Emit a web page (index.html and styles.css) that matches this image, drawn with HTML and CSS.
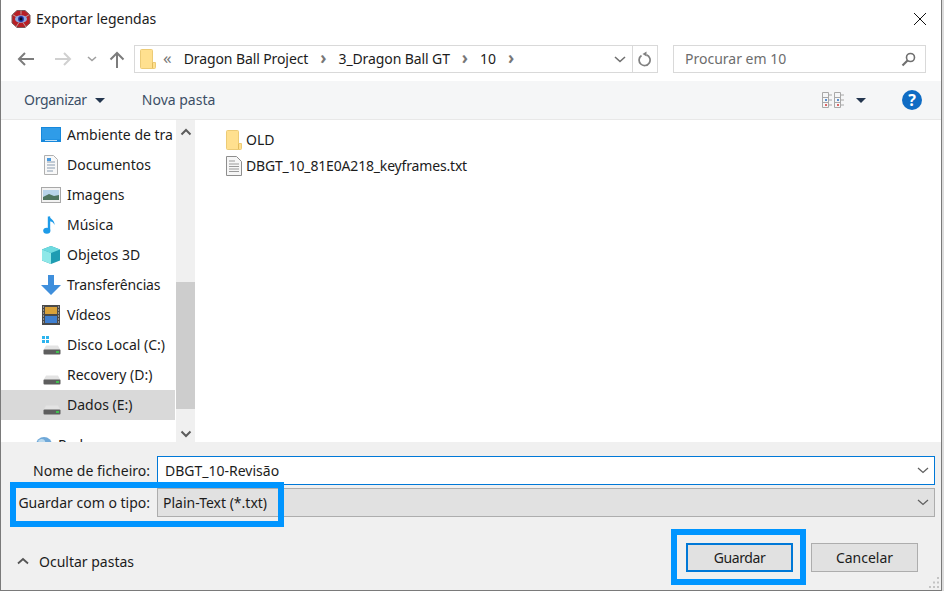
FILE: index.html
```html
<!DOCTYPE html>
<html lang="pt-PT">
<head>
  <meta charset="UTF-8" />
  <title>Exportar legendas</title>
  <link rel="stylesheet" href="styles.css">
</head>
<body>

  <svg class="defs" width="0" height="0">
    <symbol id="folder" viewBox="0 0 16 20">
      <path d="M.5 1.500a1 1 0 0 1 1-1h10a1 1 0 0 1 1 1v12h3v5a1 1 0 0 1-1 1h-13a1 1 0 0 1-1-1z" fill="#ffe08f" stroke="#eccb76"/>
      <path d="M12.500 13.500v5.500" stroke="#e2bb5c" fill="none"/>
    </symbol>
    <symbol id="drive" viewBox="0 0 18 10">
      <path d="M3 .5h12l2.500 4.500h-17z" fill="#e3e3e3"/>
      <rect x=".5" y="4.500" width="17" height="5" rx="1" fill="#5e5e5e"/>
      <rect x="13" y="6" width="3" height="2" fill="#3fc24e"/>
    </symbol>
  </svg>

  <div class="window">

    <!-- Barra de titulo -->
    <header class="titlebar">
      <svg class="app-icon" width="20" height="20" viewBox="0 0 20 20">
        <path d="M6 1.500h8l5 4.500v8l-5 4.500H6L1 14V6z" fill="#b81f25" stroke="#7a5a5a"/>
        <path d="M10 1.500v4M1.500 5.500l5 3M18.500 5.500l-5 3M5 18l3-4.500M15 18l-3-4.500" stroke="#b9a0a0" stroke-width="1"/>
        <ellipse cx="10" cy="10" rx="6" ry="3.800" fill="#8fa8e0"/>
        <circle cx="10" cy="10" r="2.900" fill="#1c2f9c"/>
        <circle cx="10" cy="10" r="1.400" fill="#05051a"/>
      </svg>
      <span class="title">Exportar legendas</span>
      <svg class="close" width="14" height="14" viewBox="0 0 14 14">
        <path d="M1 1l12 12M13 1L1 13" stroke="#111" stroke-width="1" fill="none"/>
      </svg>
    </header>

    <!-- Navegacao -->
    <nav class="navbar">
      <div class="nav-buttons">
        <svg width="18" height="14" viewBox="0 0 18 14"><path d="M17 7H2M8 1L2 7l6 6" stroke="#7c7c7c" stroke-width="2" fill="none"/></svg>
        <svg class="nav-fwd" width="18" height="14" viewBox="0 0 18 14"><path d="M1 7h15M10 1l6 6-6 6" stroke="#d0d0d0" stroke-width="2" fill="none"/></svg>
        <svg class="nav-drop" width="10" height="6" viewBox="0 0 10 6"><path d="M1 1l4 3.500L9 1" stroke="#a0a0a0" stroke-width="1.600" fill="none"/></svg>
        <svg class="nav-up" width="16" height="17" viewBox="0 0 16 17"><path d="M8 17V2M1.500 8.500L8 2l6.500 6.500" stroke="#7c7c7c" stroke-width="2" fill="none"/></svg>
      </div>
      <div class="address">
        <svg class="address-folder" width="16" height="20"><use href="#folder"/></svg>
        <span class="crumb-more">«</span>
        <span class="crumb">Dragon Ball Project</span>
        <span class="crumb-sep">›</span>
        <span class="crumb">3_Dragon Ball GT</span>
        <span class="crumb-sep">›</span>
        <span class="crumb">10</span>
        <span class="crumb-sep">›</span>
        <svg class="address-drop" width="12" height="7" viewBox="0 0 12 7"><path d="M1 1l5 4.500L11 1" stroke="#707070" stroke-width="1.600" fill="none"/></svg>
        <span class="address-refresh">
          <svg width="14" height="16" viewBox="0 0 14 16"><path d="M3.500 4.500a5.500 5.500 0 1 0 5-.6" stroke="#808080" stroke-width="1.700" fill="none"/><path d="M5.500 .5v5l4-2.500z" fill="#808080" transform="rotate(180 7 3)"/></svg>
        </span>
      </div>
      <div class="search">
        <span class="search-text">Procurar em 10</span>
        <svg width="15" height="15" viewBox="0 0 15 15"><circle cx="9.500" cy="5.500" r="4" stroke="#6f6f6f" stroke-width="1.600" fill="none"/><path d="M6.500 8.500L1.500 13.500" stroke="#6f6f6f" stroke-width="2.200"/></svg>
      </div>
    </nav>

    <!-- Barra de comandos -->
    <div class="toolbar">
      <span class="tool tool-org">Organizar</span>
      <span class="caret caret-org"></span>
      <span class="tool tool-new">Nova pasta</span>
      <svg class="view-icon" width="22" height="16" viewBox="0 0 22 16">
        <path d="M.5.5h6v15h-6zM.5 5.500h6M.5 10.500h6M12.500.5h6v15h-6zM12.500 5.500h6M12.500 10.500h6M7 3h3M7 8h3M7 13h3M19 3h3M19 8h3M19 13h3" stroke="#a8a8a8" fill="#f5f6f7"/>
        <path d="M3 7h2v2H3zM15 7h2v2h-2z" fill="#5a8fd0"/>
        <path d="M3 12h2v2H3zM15 12h2v2h-2z" fill="#d66"/>
      </svg>
      <span class="caret caret-view"></span>
      <span class="help">?</span>
    </div>

    <!-- Painel de navegacao e lista de ficheiros -->
    <main class="main">
      <ul class="sidebar">
        <li class="side-row">
          <svg class="side-icon" width="20" height="16" viewBox="0 0 20 16"><rect width="20" height="15" y="0" fill="#1688dc"/><rect x="1" y="1" width="18" height="11.500" fill="#2f9ce8"/><rect x="4" y="13" width="12" height="1" fill="#bfe0f8"/></svg>
          <span class="side-clip">Ambiente de trabalho</span>
        </li>
        <li class="side-row">
          <svg class="side-icon" width="20" height="20" viewBox="0 0 20 20"><path d="M3.500.5h9l4 4v15h-13z" fill="#f8f8f8" stroke="#b0b0b0"/><path d="M6 7h8M6 10h8M6 13h8M6 16h6" stroke="#8a9cb0"/><path d="M6 3h4v3H6z" fill="#4a9ade"/></svg>
          <span>Documentos</span>
        </li>
        <li class="side-row">
          <svg class="side-icon" width="20" height="16" viewBox="0 0 20 16"><rect x=".5" y=".5" width="19" height="15" fill="#f2f2f2" stroke="#a8a8a8"/><rect x="2" y="3" width="16" height="10" fill="#b8d4ea"/><path d="M2 10l6-3 5 2 5-1v5H2z" fill="#4f7560"/></svg>
          <span>Imagens</span>
        </li>
        <li class="side-row">
          <svg class="side-icon" width="20" height="20" viewBox="0 0 20 20"><path d="M8 1.500v14" stroke="#1e9be8" stroke-width="2.400"/><ellipse cx="5.800" cy="15.800" rx="3.600" ry="3" fill="#1e9be8"/><path d="M8 1c1 3 6 4 5.500 9-1-3-3-3.500-5.500-4z" fill="#1e9be8"/></svg>
          <span>Música</span>
        </li>
        <li class="side-row">
          <svg class="side-icon" width="20" height="20" viewBox="0 0 20 20"><path d="M10 1l9 3.500v11L10 19l-9-3.500v-11z" fill="#1f9cb2"/><path d="M1 4.500L10 1l9 3.500L10 8z" fill="#6fdbe0"/><path d="M1 4.500L10 8v11l-9-3.500z" fill="#8fe8e8"/></svg>
          <span>Objetos 3D</span>
        </li>
        <li class="side-row">
          <svg class="side-icon" width="20" height="20" viewBox="0 0 20 20"><path d="M7 0h6v10h7l-10 10L0 10h7z" fill="#3f8fdc"/></svg>
          <span class="side-tight">Transferências</span>
        </li>
        <li class="side-row">
          <svg class="side-icon" width="20" height="20" viewBox="0 0 20 20"><rect x="1" y="0" width="18" height="20" fill="#4a4a4a"/><rect x="4" y="2" width="12" height="7" fill="#d9a23a"/><rect x="4" y="11" width="12" height="7" fill="#3f7fd0"/><path d="M2 2h1M2 5h1M2 8h1M2 11h1M2 14h1M2 17h1M17 2h1M17 5h1M17 8h1M17 11h1M17 14h1M17 17h1" stroke="#ddd"/></svg>
          <span>Vídeos</span>
        </li>
        <li class="side-row">
          <svg class="side-icon" width="20" height="20" viewBox="0 0 20 20"><path d="M1 1h3v3H1zM5 1h3v3H5zM1 5h3v3H1zM5 5h3v3H5z" fill="#2cb4ee"/><use href="#drive" x="2" y="10" width="18" height="10"/></svg>
          <span>Disco Local (C:)</span>
        </li>
        <li class="side-row">
          <svg class="side-icon" width="20" height="20" viewBox="0 0 20 20"><use href="#drive" x="2" y="10" width="18" height="10"/></svg>
          <span>Recovery (D:)</span>
        </li>
        <li class="side-row side-row-active">
          <svg class="side-icon" width="20" height="20" viewBox="0 0 20 20"><use href="#drive" x="2" y="10" width="18" height="10"/></svg>
          <span>Dados (E:)</span>
        </li>
        <li class="side-row side-row-net">
          <svg class="side-icon" width="18" height="18" viewBox="0 0 18 18"><circle cx="9" cy="9" r="8" fill="#6fa8d8"/><path d="M3 5c3-3 6-2 7 0s-3 3-5 3z" fill="#b8d8ee"/></svg>
          <span>Rede</span>
        </li>
      </ul>
      <div class="scrollbar">
        <svg class="scroll-arrow" width="12" height="8" viewBox="0 0 12 8"><path d="M1.500 6.500L6 2l4.500 4.500" stroke="#5c5c5c" stroke-width="2" fill="none"/></svg>
        <div class="scroll-track"><div class="scroll-thumb"></div></div>
        <svg class="scroll-arrow" width="12" height="8" viewBox="0 0 12 8"><path d="M1.500 1.500L6 6l4.500-4.500" stroke="#5c5c5c" stroke-width="2" fill="none"/></svg>
      </div>
      <ul class="files">
        <li class="file-row">
          <svg width="16" height="20"><use href="#folder"/></svg>
          <span>OLD</span>
        </li>
        <li class="file-row">
          <svg width="16" height="20" viewBox="0 0 16 20"><path d="M.5.5h10l5 5v14H.5z" fill="#f6f6f6" stroke="#8e8e8e"/><path d="M3 5h6M3 8h10M3 10.500h10M3 13h10M3 15.500h10" stroke="#9a9a9a"/></svg>
          <span class="file-long">DBGT_10_81E0A218_keyframes.txt</span>
        </li>
      </ul>
    </main>

    <!-- Campos e botoes -->
    <footer class="footer">
      <div class="field-row field-name">
        <label class="field-label">Nome de ficheiro:</label>
        <div class="field field-input">
          <span>DBGT_10-Revisão</span>
          <svg width="12" height="7" viewBox="0 0 12 7"><path d="M1 1l5 4.500L11 1" stroke="#606060" stroke-width="1.300" fill="none"/></svg>
        </div>
      </div>
      <div class="field-row">
        <label class="field-label">Guardar com o tipo:</label>
        <div class="field field-select">
          <span>Plain-Text (*.txt)</span>
          <svg width="12" height="7" viewBox="0 0 12 7"><path d="M1 1l5 4.500L11 1" stroke="#606060" stroke-width="1.300" fill="none"/></svg>
        </div>
      </div>
      <div class="actions">
        <div class="toggle-folders">
          <svg width="12" height="8" viewBox="0 0 12 8"><path d="M1 6.500L6 2l5 4.500" stroke="#555" stroke-width="1.800" fill="none"/></svg>
          <span>Ocultar pastas</span>
        </div>
        <button class="btn btn-default">Guardar</button>
        <button class="btn">Cancelar</button>
      </div>
      <svg class="grip" width="12" height="12" viewBox="0 0 12 12">
        <path d="M9 0h2v2H9zM5 4.500h2v2H5zM9 4.500h2v2H9zM1 9h2v2H1zM5 9h2v2H5zM9 9h2v2H9z" fill="#c4c4c4"/>
      </svg>
    </footer>

    <!-- Marcacoes azuis por cima da janela -->
    <div class="mark mark-type"></div>
    <div class="mark mark-save"></div>
  </div>

</body>
</html>
```

FILE: styles.css
```css
* {
  box-sizing: border-box;
}

html, body {
  margin: 0;
  padding: 0;
  height: 100%;
  overflow: hidden;
  background: #dcdcdc;
}

body {
  font-family: 'Noto Sans', 'Open Sans', sans-serif;
  font-size: 14px;
  color: #1c1c1c;
}

ul {
  list-style: none;
  margin: 0;
  padding: 0;
}

.defs {
  position: absolute;
}

.window {
  position: relative;
  width: 942px;
  height: 591px;
  background: #fff;
  border-left: 1px solid #7a7a7a;
  border-right: 1px solid #7a7a7a;
  border-bottom: 1px solid #7a7a7a;
  display: flex;
  flex-direction: column;
}

/* o texto fica 1px acima do centro da linha */
.title, .crumb, .search-text, .tool, .side-row span, .file-row span {
  padding-bottom: 2px;
}

/* Barra de titulo */
.titlebar {
  height: 38px;
  flex: none;
  display: flex;
  align-items: center;
  padding: 0 14px 0 10px;
}

.app-icon {
  margin-right: 5px;
}

.title {
  flex: 1;
}

/* Navegacao */
.navbar {
  height: 43px;
  flex: none;
  display: flex;
  padding: 7px 15px 8px 16px;
}

.nav-buttons {
  width: 117px;
  display: flex;
  align-items: center;
}

.nav-fwd {
  margin-left: 19px;
}

.nav-drop {
  margin-left: 15px;
}

.nav-up {
  margin-left: 12px;
}

.address {
  width: 524px;
  display: flex;
  align-items: center;
  border: 1px solid #d9d9d9;
  padding-left: 5px;
}

.address-folder {
  margin-right: 7px;
}

.crumb {
  letter-spacing: -0.1px;
}

.crumb-more, .crumb-sep {
  color: #777;
  font-size: 17px;
  line-height: 1;
  padding-bottom: 3px;
}

.crumb-more {
  margin-right: 12px;
}

.crumb-sep {
  margin: 0 12px;
  font-weight: bold;
}

.address-drop {
  margin-left: auto;
  margin-right: 6px;
}

.address-refresh {
  width: 25px;
  height: 100%;
  border-left: 1px solid #d9d9d9;
  display: flex;
  align-items: center;
  justify-content: center;
}

.search {
  width: 253px;
  margin-left: 15px;
  display: flex;
  align-items: center;
  justify-content: space-between;
  border: 1px solid #d9d9d9;
  padding: 0 9px 0 11px;
  color: #6d6d6d;
}

/* Barra de comandos */
.toolbar {
  height: 39px;
  flex: none;
  display: flex;
  align-items: center;
  background: #f5f6f7;
  border-bottom: 1px solid #e8e8e8;
  padding-left: 23px;
}

.tool {
  color: #3c4f66;
}

.tool-org {
  letter-spacing: -0.3px;
}

.tool-new {
  margin-left: 37px;
}

.caret {
  width: 0;
  height: 0;
  border-left: 5px solid transparent;
  border-right: 5px solid transparent;
  border-top: 5px solid #24364f;
}

.caret-org {
  margin-left: 8px;
}

.view-icon {
  margin-left: auto;
}

.caret-view {
  margin-left: 12px;
}

.help {
  width: 20px;
  height: 20px;
  margin: 0 19px 0 36px;
  border-radius: 50%;
  background: #0f6cc4;
  color: #fff;
  font-size: 16px;
  font-weight: bold;
  line-height: 20px;
  text-align: center;
}

/* Painel principal */
.main {
  height: 322px;
  flex: none;
  display: flex;
  overflow: hidden;
}

.sidebar {
  width: 174px;
  flex: none;
  margin-right: 1px;
  overflow: hidden;
}

.side-row {
  height: 30px;
  display: flex;
  align-items: center;
  padding-left: 40px;
  white-space: nowrap;
}

.side-row span {
  margin-left: 6px;
}

.side-row .side-clip {
  max-width: 106px;
  overflow: hidden;
}

.side-tight {
  letter-spacing: -0.15px;
}

.side-icon {
  width: 20px;
  flex: none;
}

.side-row-active {
  background: #d9d9d9;
}

.side-row-net {
  margin-top: 10px;
  padding-left: 33px;
}

.side-row-net span {
  margin-left: 4px;
}

.scrollbar {
  width: 19px;
  flex: none;
  display: flex;
  flex-direction: column;
  align-items: center;
  background: #f0f0f0;
}

.scroll-arrow {
  flex: none;
  margin: 8px 0 4px;
}

.scroll-track {
  flex: 1;
  width: 100%;
  padding-top: 142px;
}

.scroll-thumb {
  height: 127px;
  background: #cdcdcd;
}

.files {
  flex: 1;
  padding: 7px 0 0 31px;
}

.file-row {
  height: 26px;
  display: flex;
  align-items: center;
  gap: 4px;
}

.file-long {
  letter-spacing: -0.17px;
}

/* Campos e botoes */
.footer {
  position: relative;
  flex: 1;
  background: #f0f0f0;
  padding-top: 14px;
}

.field-row {
  display: flex;
  height: 29px;
  margin-bottom: 3px;
  padding-right: 6px;
}

.field-label {
  width: 149px;
  margin-right: 7px;
  flex: none;
  text-align: right;
  line-height: 29px;
}

.field {
  flex: 1;
  display: flex;
  align-items: center;
  justify-content: space-between;
  padding: 0 5px 0 7px;
}

.field-input {
  background: #fff;
  border: 1px solid #0078d7;
}

.field-select {
  background: #e1e1e1;
  border: 1px solid #adadad;
  padding-left: 5px;
}

.actions {
  display: flex;
  align-items: center;
  margin-top: 26px;
  padding: 0 23px 0 16px;
}

.toggle-folders {
  flex: 1;
  display: flex;
  align-items: center;
  gap: 10px;
  margin-top: 7px;
}

.btn {
  width: 107px;
  height: 29px;
  font: inherit;
  color: #1c1c1c;
  background: #e1e1e1;
  border: 1px solid #adadad;
  padding: 0;
}

.btn + .btn {
  margin-left: 18px;
}

.btn-default {
  border: 2px solid #0078d7;
  letter-spacing: -0.4px;
}

.grip {
  position: absolute;
  right: 1px;
  bottom: 1px;
}

/* Marcacoes azuis */
.mark {
  position: absolute;
  border: 6px solid #0095ff;
}

.mark-type {
  left: 9px;
  top: 482px;
  width: 274px;
  height: 45px;
}

.mark-save {
  left: 670px;
  top: 529px;
  width: 135px;
  height: 56px;
}
```
